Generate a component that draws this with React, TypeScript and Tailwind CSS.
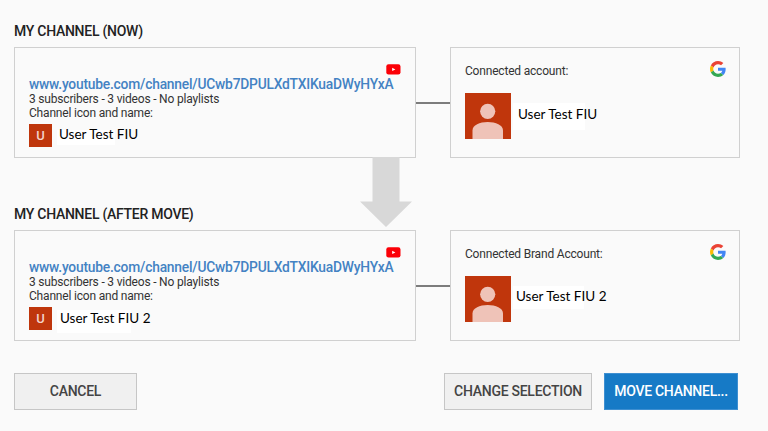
import React from "react";

function YouTubeIcon() {
  return (
    <svg className="block h-[11px] w-[15px]" viewBox="0 0 15 11">
      <rect x="0.3" y="0.3" width="14.2" height="10.2" rx="2.2" fill="#fb0007" />
      <path d="M6.2 3.7 9.4 5.4 6.2 7.1Z" fill="#fff" />
    </svg>
  );
}

function GoogleIcon() {
  return (
    <svg className="block h-4 w-4" viewBox="0 0 48 48">
      <path fill="#ea4335" d="M24 9.5c3.54 0 6.71 1.22 9.21 3.6l6.85-6.85C35.9 2.38 30.47 0 24 0 14.62 0 6.51 5.38 2.56 13.22l7.98 6.19C12.43 13.72 17.74 9.5 24 9.5z" />
      <path fill="#4285f4" d="M46.98 24.55c0-1.57-.15-3.09-.38-4.55H24v9.02h12.94c-.58 2.96-2.26 5.48-4.78 7.18l7.73 6c4.51-4.18 7.09-10.36 7.09-17.65z" />
      <path fill="#fbbc05" d="M10.53 28.59c-.48-1.45-.76-2.99-.76-4.59s.27-3.14.76-4.59l-7.98-6.19C.92 16.46 0 20.12 0 24c0 3.88.92 7.54 2.56 10.78l7.97-6.19z" />
      <path fill="#34a853" d="M24 48c6.48 0 11.93-2.13 15.89-5.81l-7.73-6c-2.15 1.45-4.92 2.3-8.16 2.3-6.26 0-11.57-4.22-13.47-9.91l-7.98 6.19C6.51 42.62 14.62 48 24 48z" />
    </svg>
  );
}

function Avatar() {
  return (
    <svg className="block h-[46px] w-[46px] shrink-0" viewBox="0 0 46 46">
      <rect width="46" height="46" fill="#c0360c" />
      <circle cx="22.7" cy="18.3" r="7.6" fill="#efc3b8" />
      <path d="M7.5 46V37.5C7.5 32 14.7 29 22.7 29s15.3 3 15.3 8.5V46Z" fill="#efc3b8" />
    </svg>
  );
}

const nameText =
  "whitespace-nowrap font-['Lato','Liberation_Sans',sans-serif] text-[13.5px] leading-4 text-black";

const smallText = "whitespace-nowrap text-[12px] leading-[14px] tracking-[-0.19px] text-[#333]";

const headingText = "whitespace-nowrap text-[14px] font-medium leading-4 tracking-[-0.27px] text-[#222]";

const buttonText = "whitespace-nowrap border text-[14px] font-medium tracking-[-0.27px]";

function ChannelCard({ children }: { children: React.ReactNode }) {
  return (
    <div className="h-full w-[402px] border border-[#d0d0d0] pl-[14px] pr-[14px] pt-[16px]">
      <div className="flex justify-end">
        <YouTubeIcon />
      </div>
      <div className="mt-px whitespace-nowrap text-[13.8px] font-medium leading-[16px] tracking-[-0.21px] text-[#4382c3]">
        www.youtube.com/channel/UCwb7DPULXdTXIKuaDWyHYxA
      </div>
      <div className={smallText}>3 subscribers - 3 videos - No playlists</div>
      <div className={smallText}>Channel icon and name:</div>
      <div className="mt-[4px] flex">
        <div className="flex h-[23px] w-[23px] items-center justify-center bg-[#bf360c] pt-px text-[13px] font-medium text-[#f3d3ca]">
          U
        </div>
        {children}
      </div>
    </div>
  );
}

function AccountCard({ label, children }: { label: string; children: React.ReactNode }) {
  return (
    <div className="h-full w-[290px] border border-[#d0d0d0] pl-[14px] pr-[13px] pt-[13px]">
      <div className="flex h-[18px] items-start justify-between">
        <div className={`${smallText} mt-[3px]`}>{label}</div>
        <GoogleIcon />
      </div>
      <div className="mt-[14px] flex">
        <Avatar />
        {children}
      </div>
    </div>
  );
}

function Connector() {
  return <div className="mt-[55px] h-[2px] w-[34px] bg-[#7c7c7c]" />;
}

export default function App() {
  return (
    <div className="h-[431px] w-[768px] overflow-hidden bg-[#fafafa] pl-[14px] font-['Roboto','Liberation_Sans',sans-serif]">
      <div className="flex h-[47px] pt-[23px]">
        <h2 className={headingText}>MY CHANNEL (NOW)</h2>
      </div>
      <div className="flex h-[111px] items-start">
        <ChannelCard>
          <div className="ml-[5px] mt-[6px] h-[15px] w-[58px] bg-white">
            <div className={`${nameText} -mt-[4px] ml-[2px]`}>User Test FIU</div>
          </div>
        </ChannelCard>
        <Connector />
        <AccountCard label="Connected account:">
          <div className="ml-[2px] mt-[10px] h-[27px] w-[72px] bg-white pl-[5px] pt-[3px]">
            <div className={nameText}>User Test FIU</div>
          </div>
        </AccountCard>
      </div>
      <div className="flex h-[72px] items-start">
        <h2 className={`${headingText} mt-[48px] w-[346px]`}>MY CHANNEL (AFTER MOVE)</h2>
        <svg className="-mt-px block h-[70px] w-[52px]" viewBox="0 0 52 70">
          <path d="M12.5 0H39.5V44.5H52L26 70L0 44.5H12.5Z" fill="#d8d8d8" />
        </svg>
      </div>
      <div className="flex h-[111px] items-start">
        <ChannelCard>
          <div className="ml-[5px] mt-[3px] h-[23px] w-[74px] bg-white pl-[3px]">
            <div className={nameText}>User Test FIU 2</div>
          </div>
        </ChannelCard>
        <Connector />
        <AccountCard label="Connected Brand Account:">
          <div className="ml-[2px] mt-[10px] h-[23px] w-[71px] bg-white pl-[3px] pt-[2px]">
            <div className={nameText}>User Test FIU 2</div>
          </div>
        </AccountCard>
      </div>
      <div className="mt-[32px] flex h-[37px] w-[724px]">
        <button className={`${buttonText} w-[123px] border-[#c6c6c6] bg-[#f0f0f0] text-[#444]`}>
          CANCEL
        </button>
        <button className={`${buttonText} ml-auto w-[148px] border-[#c6c6c6] bg-[#f0f0f0] text-[#444]`}>
          CHANGE SELECTION
        </button>
        <button className={`${buttonText} ml-[12px] w-[134px] border-[#3e8fd1] bg-[#167ac6] text-white`}>
          MOVE CHANNEL...
        </button>
      </div>
    </div>
  );
}
